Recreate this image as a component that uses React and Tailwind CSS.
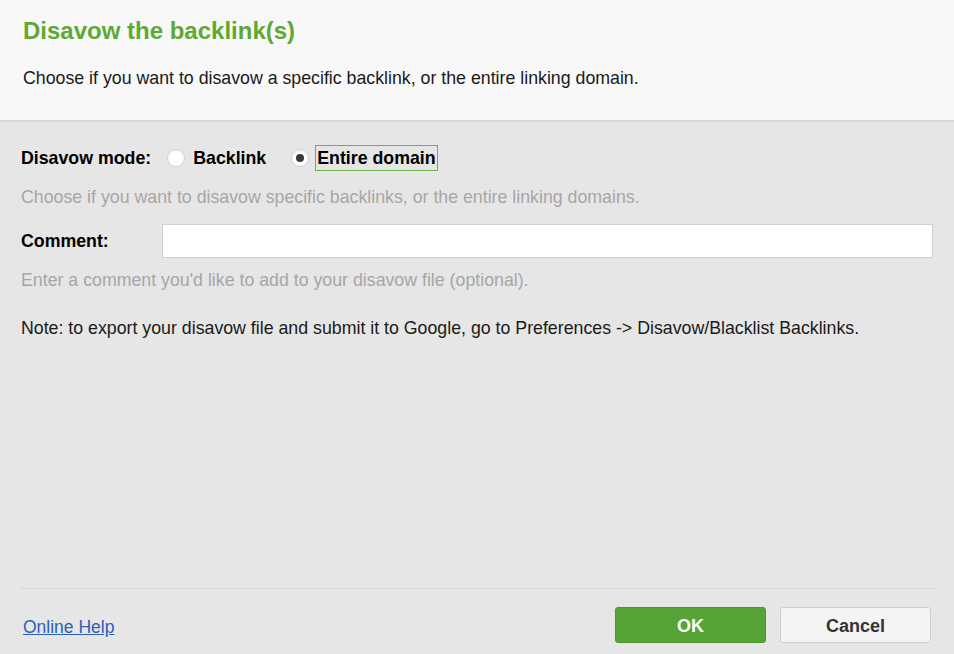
import React, { useState } from 'react';

export default function App() {
    const [mode, setMode] = useState('domain');
    const [comment, setComment] = useState('');

    const Radio = ({ value, label }) => {
        const checked = mode === value;
        return (
            <label className="flex items-center cursor-pointer" onClick={() => setMode(value)}>
                <span className="w-[18px] h-[18px] rounded-full bg-white border border-[#d4d4d4] shadow-[inset_0_1px_2px_rgba(0,0,0,0.08)] flex items-center justify-center">
                    {checked && <span className="w-[8px] h-[8px] rounded-full bg-[#3a3a3a]" />}
                </span>
                <span
                    className={`ml-[6px] px-[1px] leading-[24px] font-bold text-[17.75px] text-black border ${checked ? 'border-[#6cb33f]' : 'border-transparent'}`}
                >
                    {label}
                </span>
            </label>
        );
    };

    return (
        <div className="w-[954px] h-[654px] flex flex-col bg-[#e6e6e6] font-['Liberation_Sans',Arial,sans-serif] overflow-hidden">
            {/* Header */}
            <div className="h-[122px] shrink-0 bg-[#f8f8f8] border-b-2 border-[#d6d6d6] px-[23px] pt-[17px]">
                <h1 className="text-[24px] font-bold text-[#5fa833] leading-[28px]">Disavow the backlink(s)</h1>
                <p className="mt-[22px] text-[17.75px] text-[#1a1a1a] leading-[22px]">
                    Choose if you want to disavow a specific backlink, or the entire linking domain.
                </p>
            </div>

            {/* Body */}
            <div className="flex-1 flex flex-col px-[21px]">
                <div className="flex items-center mt-[23px] h-[26px]">
                    <span className="font-bold text-[17.75px] text-black mr-[16px]">Disavow mode:</span>
                    <div className="flex items-center gap-[23px]">
                        <Radio value="backlink" label="Backlink" />
                        <Radio value="domain" label="Entire domain" />
                    </div>
                </div>
                <p className="mt-[15px] text-[17.75px] text-[#a6a6a6] leading-[22px]">
                    Choose if you want to disavow specific backlinks, or the entire linking domains.
                </p>

                <div className="flex items-center mt-[16px]">
                    <span className="w-[141px] font-bold text-[17.75px] text-black">Comment:</span>
                    <input
                        value={comment}
                        onChange={(e) => setComment(e.target.value)}
                        className="flex-1 h-[34px] bg-white border border-[#d0d0d0] outline-none px-2 text-[16px]"
                    />
                </div>
                <p className="mt-[11px] text-[17.75px] text-[#a6a6a6] leading-[22px]">
                    Enter a comment you'd like to add to your disavow file (optional).
                </p>

                <p className="mt-[26px] text-[17.75px] text-[#1a1a1a] leading-[22px]">
                    Note: to export your disavow file and submit it to Google, go to Preferences -&gt; Disavow/Blacklist Backlinks.
                </p>
            </div>

            {/* Footer */}
            <div className="shrink-0 mx-[20px] border-t border-[#d9d9d9] h-[66px] flex items-center justify-between pl-[3px] pr-[3px]">
                <a href="#" className="text-[17.5px] text-[#2b5fb8] underline mt-[12px]">Online Help</a>
                <div className="flex gap-[14px] mt-[7px]">
                    <button className="w-[151px] h-[36px] rounded-[3px] bg-[#56a435] border border-[#4c9630] text-white font-bold text-[18px] pt-[2px]">
                        OK
                    </button>
                    <button className="w-[151px] h-[36px] rounded-[3px] bg-[#f4f4f4] border border-[#cfcfcf] text-[#333] font-bold text-[18px] pt-[2px]">
                        Cancel
                    </button>
                </div>
            </div>
        </div>
    );
}
